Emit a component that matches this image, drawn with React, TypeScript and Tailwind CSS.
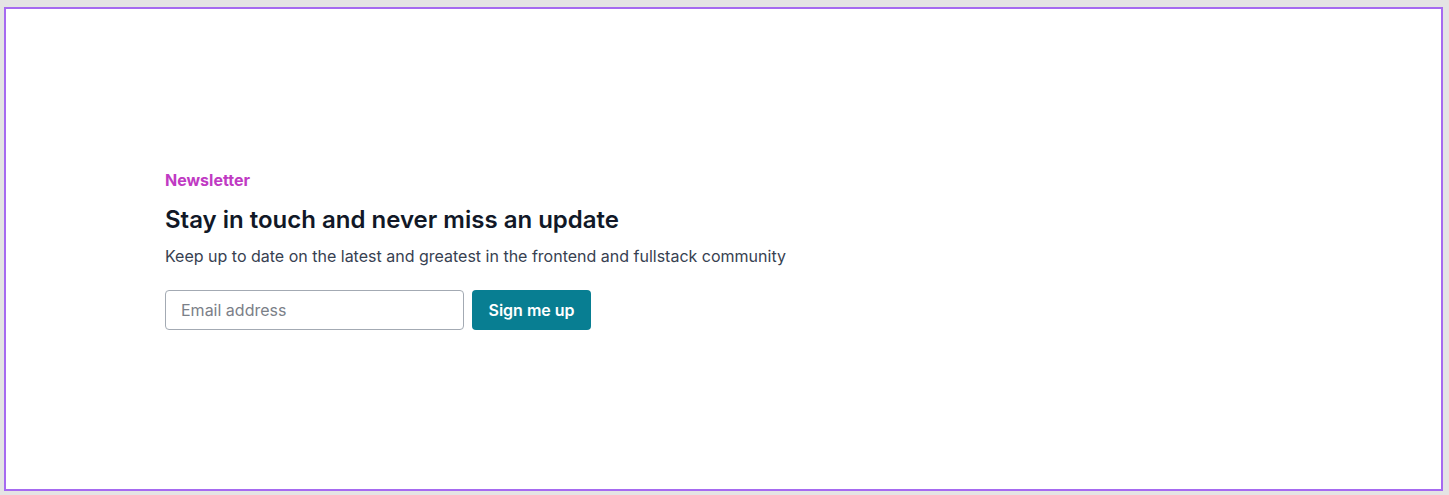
export default function App() {
  return (
    <div className="h-[495px] w-full bg-[#e4e4e4] pb-[4px] pl-[4px] pr-[6px] pt-[7px] font-['Inter',sans-serif]">
      <div className="flex h-full flex-col justify-center border-2 border-[#a66af0] bg-white pl-[159px]">
        <div className="flex flex-col">
          <p className="text-base font-bold leading-6 text-[#c03ac3]">Newsletter</p>
          <h2 className="mt-[12px] text-2xl font-semibold leading-8 text-[#111827]">
            Stay in touch and never miss an update
          </h2>
          <p className="mt-[8px] text-base leading-6 text-[#374151]">
            Keep up to date on the latest and greatest in the frontend and fullstack community
          </p>
          <form className="mt-[22px] flex gap-2" onSubmit={(e) => e.preventDefault()}>
            <input
              type="email"
              placeholder="Email address"
              className="h-10 w-[299px] rounded border border-[#a3aab3] px-[15px] text-base text-gray-900 placeholder:text-[#7b8088]"
            />
            <button className="h-10 rounded bg-[#087e92] px-[16.5px] text-base font-semibold text-white">
              Sign me up
            </button>
          </form>
        </div>
      </div>
    </div>
  );
}
